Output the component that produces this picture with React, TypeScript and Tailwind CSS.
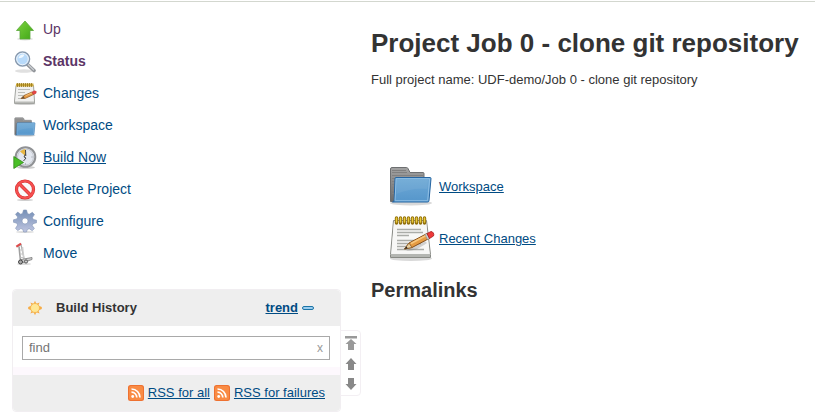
import type { ReactNode } from 'react';

function UpIcon() {
  return (
    <svg viewBox="0 0 24 24" className="h-6 w-6 shrink-0" aria-hidden="true">
      <defs>
        <linearGradient id="up" x1="0" y1="0" x2="1" y2="1">
          <stop offset="0" stopColor="#7ed340" />
          <stop offset="1" stopColor="#3fa616" />
        </linearGradient>
      </defs>
      <ellipse cx="12" cy="22" rx="8" ry="1.500" fill="#ccc" opacity=".6" />
      <path d="M12 4 20.500 13.500H17V22H7V13.500H3.500Z" fill="url(#up)" stroke="#5ba83a" strokeWidth=".8" strokeLinejoin="round" />
    </svg>
  );
}

function SearchIcon() {
  return (
    <svg viewBox="0 0 24 24" className="h-6 w-6 shrink-0" aria-hidden="true">
      <ellipse cx="11" cy="22" rx="9" ry="1.800" fill="#ccc" opacity=".6" />
      <path d="m14 15 7 6.500" stroke="#92959a" strokeWidth="3.600" strokeLinecap="round" />
      <path d="m15 15.500 5.500 5.200" stroke="#c9cdd1" strokeWidth="1.400" strokeLinecap="round" />
      <circle cx="9.500" cy="10" r="7" fill="#bcdcfa" stroke="#8799ae" strokeWidth="1.600" />
      <circle cx="9.500" cy="10" r="5.800" fill="#b8dafa" stroke="#eef4fa" />
      <path d="M5.500 9.200c.5-3 3.500-4.500 6-3.500-1 2.500-3 3.500-6 3.500Z" fill="#eff8ff" />
    </svg>
  );
}

function SmallNotepadIcon() {
  return (
    <svg viewBox="0 0 24 24" className="h-6 w-6 shrink-0" aria-hidden="true">
      <ellipse cx="12" cy="23" rx="10.500" ry="1" fill="#bbb" opacity=".7" />
      <path d="M3 4.500h17.500L21.500 20v2.500H1.500V20Z" fill="#f1f1f0" stroke="#a3a5a1" strokeLinejoin="round" />
      <path d="M2 20.500h19v1.500H2Z" fill="#b9bab7" />
      <path d="M5 8.500h12M5 11.500h7M5 14.500h11M5 17.500h6" stroke="#bbbdb9" />
      <path d="M3 2.500h17.500v3H3Z" fill="#cfac3c" />
      <path d="M4.500 2v4M6.500 2v4M8.500 2v4M10.500 2v4M12.500 2v4M14.500 2v4M16.500 2v4M18.500 2v4" stroke="#96761c" strokeWidth=".8" />
      <path d="m8 17.500 3-3 8-3.500 1.500 2.500-8.500 4Z" fill="#e79a44" stroke="#95612a" strokeWidth=".8" strokeLinejoin="round" />
      <path d="m8 17.500 2.500-2.500 1.300 2.300Z" fill="#675039" />
      <path d="m12.500 14.800 6.500-2.900" stroke="#f6c783" strokeWidth=".8" />
      <path d="m19 11 2.500-1.200 1.800.7-.3 1.800-2.500 1.200Z" fill="#ea4545" stroke="#ba3030" strokeWidth=".5" />
    </svg>
  );
}

function NotepadIcon() {
  return (
    <svg viewBox="0 0 48 48" className="h-12 w-12 shrink-0" aria-hidden="true">
      <ellipse cx="24" cy="43.500" rx="21" ry="2.500" fill="#aaa" opacity=".45" />
      <path d="M6.500 5.500h33l4 34v3h-40v-3Z" fill="#f5f5f4" stroke="#888a85" strokeLinejoin="round" />
      <path d="M4 39h39V42H4Z" fill="#b4b6b2" />
      <path d="M7 6.500h32l3.400 32h-37.800Z" fill="#f7f7f6" />
      <path d="M10 14.500h24M10 17.500h26M10 20.500h12M10 25.500h24M10 28.500h24M10 31.500h14M10 34.500h27" stroke="#aaaca8" strokeWidth="1.300" />
      <path d="M9.500 3v5M13.500 3v5M17.500 3v5M21.500 3v5M25.500 3v5M29.500 3v5M33.500 3v5M37.500 3v5" stroke="#92700c" strokeWidth="3.400" strokeLinecap="round" />
      <path d="M9.500 3v4M13.500 3v4M17.500 3v4M21.500 3v4M25.500 3v4M29.500 3v4M33.500 3v4M37.500 3v4" stroke="#e9ca3b" strokeWidth="1.500" strokeLinecap="round" />
      <path d="M19 36c8 0 14-3 21-8l-3-3Z" fill="#777" opacity=".3" />
      <path d="m17.500 34 4.500-6 18-9.500 3 4.500-18 9.500Z" fill="#e59b42" stroke="#87501a" strokeLinejoin="round" />
      <path d="m24 28.500 16-8.500" stroke="#f7c77d" strokeWidth="1.600" />
      <path d="m17.500 34 4.500-6 3 4.500Z" fill="#e9d1a2" stroke="#8b5a25" strokeWidth=".8" />
      <path d="m17.500 34 2-2.600 1.200 1.900Z" fill="#242424" />
      <path d="m38 19.500 2.500 5 2-1L40 18.500Z" fill="#c7cacc" stroke="#888" strokeWidth=".5" />
      <path d="m40 18.500 4-2c2 0 3.500 2.500 2.500 4.500l-4 2.500Z" fill="#ef3939" stroke="#a51f1f" strokeWidth=".8" />
    </svg>
  );
}

function FolderIcon({ large = false }: { large?: boolean }) {
  return (
    <svg viewBox={large ? '0 0 48 48' : '0 -5 48 48'} className={large ? 'h-12 w-12 shrink-0' : 'h-6 w-6 shrink-0'} aria-hidden="true">
      <defs>
        <linearGradient id="folder" x1="0" y1="0" x2="0" y2="1">
          <stop offset="0" stopColor="#70aad6" />
          <stop offset="1" stopColor="#5596cb" />
        </linearGradient>
        <linearGradient id="folder-back" x1="0" y1="0" x2="0" y2="1">
          <stop offset="0" stopColor="#a2a2a2" />
          <stop offset="1" stopColor="#6c6c6c" />
        </linearGradient>
      </defs>
      <ellipse cx="24" cy="40" rx="21" ry="2.500" fill="#aaa" opacity=".45" />
      <path d="M3.500 6q0-1.500 1.500-1.500h14.500q1 0 1.500 1l2 4h13q1 0 1 1v28h-33.500Z" fill="url(#folder-back)" stroke="#6d6f71" />
      <path d="M5 7.500h14M5 9.500h15M5 12.500h31M5 15.500h3M5 18.500h3M5 21.500h3M5 24.500h3M5 27.500h3M5 30.500h3" stroke="#808080" />
      <path d="M9 14.500h34q1 0 1 1l-2 22q0 1.500-1.500 1.500H5.500q1.500 0 1.700-2L8 15.500q0-1 1-1Z" fill="url(#folder)" stroke="#2766a2" />
      <path d="M9.200 15.700h33.400l-1.900 22H8Z" fill="none" stroke="#8fbfe5" />
      <path d="M10 17h31l-.8 9C29 25 19 27 9.500 31Z" fill="#fff" opacity=".06" />
    </svg>
  );
}

function BuildIcon() {
  return (
    <svg viewBox="0 0 24 24" className="h-6 w-6 shrink-0" aria-hidden="true">
      <ellipse cx="13" cy="22.500" rx="9" ry="1.300" fill="#aaa" opacity=".6" />
      <circle cx="12.500" cy="12" r="9.800" fill="#edf0f3" stroke="#909295" strokeWidth="2" />
      <circle cx="12.500" cy="12" r="8" fill="#e3e7ef" stroke="#b9bdc5" strokeWidth=".8" />
      <path d="M12.500 11 7 6.500q3-2.500 5.500-2.500Z" fill="#e8b642" />
      <path d="m12.500 5 .3 6M12.500 9l-1.500 3 2 1-2.500 3" fill="none" stroke="#444" strokeWidth="1" />
      <path d="M19.500 12h-1M12.500 19.500v-1" stroke="#8a9199" />
      <path d="M.800 11.500 10.500 17.500 .800 23.500Z" fill="#49bf26" stroke="#32891a" strokeWidth=".8" />
    </svg>
  );
}

function DeleteIcon() {
  return (
    <svg viewBox="0 0 24 24" className="h-6 w-6 shrink-0" aria-hidden="true">
      <ellipse cx="12" cy="23" rx="8" ry="1" fill="#bbb" opacity=".7" />
      <circle cx="12" cy="12.500" r="8.500" fill="#fafafa" stroke="#d43030" strokeWidth="3.200" />
      <path d="m6.500 7 11 11" stroke="#d43030" strokeWidth="3.400" />
      <circle cx="12" cy="12.500" r="8.500" fill="none" stroke="#f65050" strokeWidth="2" />
      <path d="m6.500 7 11 11" stroke="#f65050" strokeWidth="2.200" />
    </svg>
  );
}

function GearIcon() {
  return (
    <svg viewBox="0 0 24 24" className="h-6 w-6 shrink-0" aria-hidden="true">
      <defs>
        <linearGradient id="gear" x1="0" y1="0" x2="0" y2="1">
          <stop offset="0" stopColor="#748fb6" />
          <stop offset="1" stopColor="#bfc5e0" />
        </linearGradient>
      </defs>
      <ellipse cx="12" cy="23" rx="9" ry="1" fill="#ddd" />
      <path fillRule="evenodd" d="M10.500 1h3l1 3.600 1.700.7 3.200-2 2 2.300-2 3 .8 1.800 3.300.8v2.600l-3.500.9-.8 1.800 2.200 3-2.200 2.200-3-2-1.900.8L13.500 23h-2.800l-1-2.700-1.900-.8-3 2.100-2.300-2.200L4.600 16l-.8-1.800L.500 13.300v-2.500l3.300-.9.900-1.800-2.200-2.800 2.200-2.200 2.900 2.100 1.900-.7ZM12 9a3 3 0 1 0 0 6 3 3 0 0 0 0-6Z" fill="url(#gear)" stroke="#8293b5" strokeWidth=".6" strokeLinejoin="round" />
    </svg>
  );
}

function MoveIcon() {
  return (
    <svg viewBox="0 0 24 24" className="h-6 w-6 shrink-0" aria-hidden="true">
      <ellipse cx="11" cy="23" rx="7" ry="1" fill="#ddd" />
      <path d="M4 6 8 3.500l3 14" fill="none" stroke="#aaa" strokeWidth="1.200" />
      <path d="m6 5.500 1.500 14.500" stroke="#a0a0a0" strokeWidth="1.600" />
      <path d="m9.500 6 1.500 13" stroke="#cfcfcf" strokeWidth="1.500" />
      <path d="M7 9h3M7 13h3.500M7.500 16.500H11" stroke="#c5c5c5" />
      <path d="m3.300 5.700 4.700-3" stroke="#df4b4b" strokeWidth="2" />
      <path d="m8 18.500 11-2v2L10 21.500Z" fill="#cfcfcf" stroke="#777" strokeWidth=".8" />
      <circle cx="7.500" cy="21" r="2" fill="#aaa" stroke="#444" />
      <circle cx="13" cy="20.500" r="1.600" fill="#ccc" stroke="#555" />
    </svg>
  );
}

function SunIcon() {
  return (
    <svg viewBox="0 0 16 16" className="h-4 w-4 shrink-0" aria-hidden="true">
      <path d="m8 .800 1.400 3 3.200-1.400-1.300 3.200 3.500 1.400v2l-3.500 1.400 1.300 3.200-3.200-1.300-1.400 2.900-1.400-2.900-3.200 1.300 1.300-3.200L1.200 9V7l3.500-1.400-1.300-3.200 3.200 1.400Z" fill="#f7ac45" />
      <circle cx="8" cy="8" r="4.500" fill="#ffe794" stroke="#f2b34b" strokeWidth=".8" />
    </svg>
  );
}

function RssIcon() {
  return (
    <svg viewBox="0 0 16 16" className="h-4 w-4 shrink-0" aria-hidden="true">
      <rect width="16" height="16" rx="2.500" fill="#ee7130" />
      <rect x="1" y="1" width="14" height="14" rx="2" fill="#f98b44" />
      <circle cx="4.700" cy="11.500" r="1.400" fill="white" />
      <path d="M3.500 7.200a5.300 5.300 0 0 1 5.300 5.300M3.500 4a8.500 8.500 0 0 1 8.500 8.500" fill="none" stroke="white" strokeWidth="1.700" />
    </svg>
  );
}

type Task = { label: string; icon: ReactNode; style: string };

const tasks: Task[] = [
  { label: 'Up', icon: <UpIcon />, style: 'text-[#5c3566]' },
  { label: 'Status', icon: <SearchIcon />, style: 'font-bold text-[#5c3566]' },
  { label: 'Changes', icon: <SmallNotepadIcon />, style: 'text-[#004b83]' },
  { label: 'Workspace', icon: <FolderIcon />, style: 'text-[#004b83]' },
  { label: 'Build Now', icon: <BuildIcon />, style: 'text-[#004b83] underline' },
  { label: 'Delete Project', icon: <DeleteIcon />, style: 'text-[#004b83]' },
  { label: 'Configure', icon: <GearIcon />, style: 'text-[#004b83]' },
  { label: 'Move', icon: <MoveIcon />, style: 'text-[#004b83]' },
];

function BuildHistory() {
  return (
    <section className="relative mt-5 rounded border border-[#f1eef1]">
      <header className="flex h-9 items-center rounded-t bg-[#eeeeee] pr-[26px] pl-[14px]">
        <SunIcon />
        <h2 className="ml-[13px] flex-1 font-bold">Build History</h2>
        <a href="#trend" className="font-bold text-[#004b83] underline">trend</a>
        <button type="button" aria-label="Collapse" className="ml-1 h-1 w-3 rounded-xs border border-[#1b74a5] bg-[#9bcdf0]" />
      </header>
      <div className="border-b-8 border-[#fdf8fd] pt-[10px] pr-[10px] pb-[7px] pl-[9px]">
        <form className="flex h-6 items-center border border-[#a9a9a9] px-[6px]">
          <input aria-label="Find builds" placeholder="find" className="min-w-0 flex-1 bg-transparent outline-none placeholder:text-[#757575]" />
          <button type="reset" aria-label="Clear" className="text-xs text-[#999999]">x</button>
        </form>
      </div>
      <footer className="flex h-9 items-center justify-end gap-1 rounded-b bg-[#eeeeee] pr-[15px]">
        <RssIcon />
        <a href="#rss-all" className="text-[#004b83] underline">RSS for all</a>
        <RssIcon />
        <a href="#rss-failed" className="text-[#004b83] underline">RSS for failures</a>
      </footer>
      <div className="absolute top-10 left-full flex h-[66px] w-[21px] flex-col items-center justify-between rounded-r border border-[#f3eff3] bg-white py-[5px]">
        <button type="button" aria-label="Newest builds" className="block">
          <svg viewBox="0 0 12 14" className="h-[14px] w-3"><path d="M0 0h12v2.500H0ZM6 3l5.500 5H9v6H3V8H.500Z" fill="#999" /></svg>
        </button>
        <button type="button" aria-label="Newer builds" className="block">
          <svg viewBox="0 0 12 12" className="h-3 w-3"><path d="m6 0 5.500 6H9v6H3V6H.500Z" fill="#888" /></svg>
        </button>
        <button type="button" aria-label="Older builds" className="block">
          <svg viewBox="0 0 12 12" className="h-3 w-3"><path d="M6 12 .500 6H3V0h6v6h2.500Z" fill="#888" /></svg>
        </button>
      </div>
    </section>
  );
}

export default function App() {
  return (
    <div className="mt-px border-t border-[#d3d7cf] bg-white font-['Liberation_Sans',Arial,sans-serif] text-[13px] leading-4 text-[#333333]">
      <div className="flex">
        <aside className="w-[341px] shrink-0 pt-[11px] pb-[6px] pl-3">
          <nav aria-label="Project">
            <ul>
              {tasks.map((task) => (
                <li key={task.label} className="h-8">
                  <a href="#task" className={`inline-flex h-8 items-center gap-[6px] pl-px text-sm ${task.style}`}>
                    {task.icon}
                    {task.label}
                  </a>
                </li>
              ))}
            </ul>
          </nav>
          <BuildHistory />
        </aside>
        <main className="min-w-0 flex-1 pt-[25px] pl-[30px]">
          <h1 className="text-[26px] leading-8 font-bold whitespace-nowrap">Project Job 0 - clone git repository</h1>
          <p className="mt-[13px]">Full project name: UDF-demo/Job 0 - clone git repository</p>
          <div className="mt-[73px] pl-4">
            <a href="#workspace" className="flex h-[52px] items-center gap-1 text-[#004b83] underline">
              <FolderIcon large />
              Workspace
            </a>
            <a href="#changes" className="flex h-[52px] items-center gap-1 text-[#004b83] underline">
              <NotepadIcon />
              Recent Changes
            </a>
          </div>
          <h2 className="mt-[13px] text-xl leading-6 font-bold">Permalinks</h2>
        </main>
      </div>
    </div>
  );
}
